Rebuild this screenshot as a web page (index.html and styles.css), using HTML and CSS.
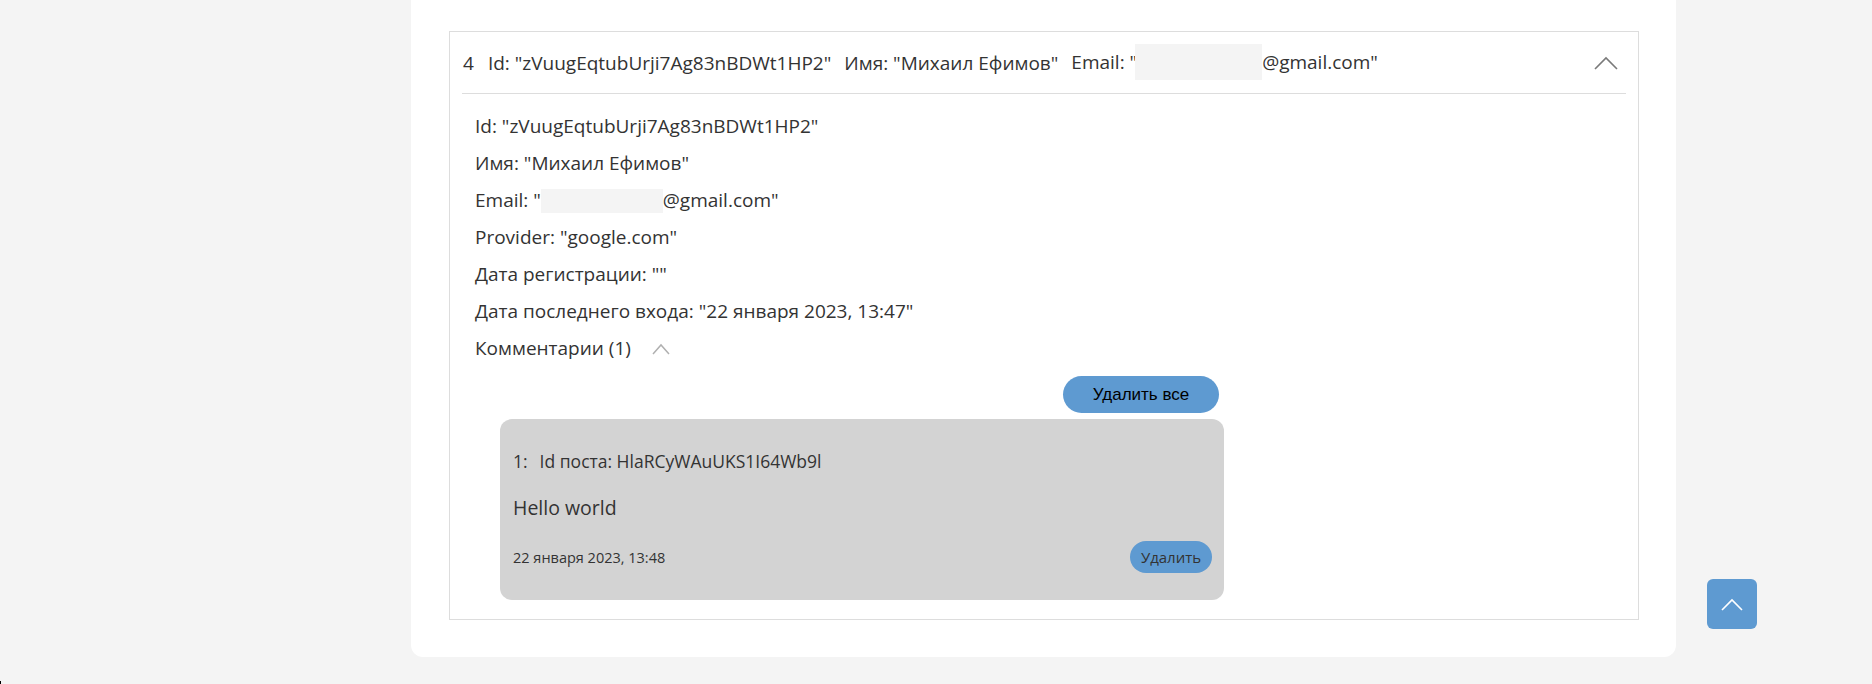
FILE: index.html
```html
<!DOCTYPE html>
<html lang="ru">
<head>
<meta charset="utf-8">
<title>Пользователи</title>
<link rel="stylesheet" href="styles.css">
</head>
<body>
<div class="page">
  <main class="card">
    <section class="acc">
      <div class="acc-head">
        <span class="acc-num">4</span>
        <span class="acc-item">Id: "zVuugEqtubUrji7Ag83nBDWt1HP2"</span>
        <span class="acc-item">Имя: "Михаил Ефимов"</span>
        <span class="acc-item">Email: "<span class="mask mask-head"></span>@gmail.com"</span>
        <svg class="chev-big" width="24" height="14" viewBox="0 0 24 14"><path d="M1 13 L12 2 L23 13" fill="none" stroke="#7a7a7a" stroke-width="1.6"/></svg>
      </div>
      <div class="acc-body">
        <div class="row">Id: "zVuugEqtubUrji7Ag83nBDWt1HP2"</div>
        <div class="row">Имя: "Михаил Ефимов"</div>
        <div class="row">Email: "<span class="mask mask-row"></span>@gmail.com"</div>
        <div class="row">Provider: "google.com"</div>
        <div class="row">Дата регистрации: ""</div>
        <div class="row">Дата последнего входа: "22 января 2023, 13:47"</div>
        <div class="row toggle">Комментарии (1)
          <svg class="chev-small" width="18" height="12" viewBox="0 0 18 12"><path d="M1 11 L9 2 L17 11" fill="none" stroke="#b0b0b0" stroke-width="1.5"/></svg>
        </div>
        <div class="comments">
          <div class="del-all-row"><button class="btn-del-all">Удалить все</button></div>
          <article class="comment">
            <div class="c-head"><span class="c-num">1:</span><span>Id поста: HlaRCyWAuUKS1I64Wb9l</span></div>
            <div class="c-text">Hello world</div>
            <div class="c-foot">
              <span class="c-date">22 января 2023, 13:48</span>
              <button class="btn-del">Удалить</button>
            </div>
          </article>
        </div>
      </div>
    </section>
  </main>
  <div class="footer-mark"></div>
</div>
<button class="to-top" aria-label="Наверх">
  <svg width="22" height="13" viewBox="0 0 22 13"><path d="M1 12 L11 2 L21 12" fill="none" stroke="#ffffff" stroke-width="1.6"/></svg>
</button>
</body>
</html>
```
FILE: styles.css
```css
html, body {
  margin: 0;
  padding: 0;
}
body {
  background: #f4f4f4;
  font-family: "Open Sans", "Noto Sans", sans-serif;
  color: #333;
  overflow: hidden;
}
.page {
  padding-left: 411px;
  width: 1265px;
}
.card {
  background: #fff;
  border-radius: 0 0 12px 12px;
  padding: 31px 37px 37px 38px;
}
.acc {
  border: 1px solid #ddd;
  padding-bottom: 19px;
}
.acc-head {
  display: flex;
  align-items: center;
  margin: 0 12px;
  height: 61px;
  padding: 0 0 0 1px;
  border-bottom: 1px solid #ddd;
  font-size: 19px;
  line-height: 24px;
}
.acc-num {
  margin-right: 14px;
}
.acc-item {
  margin-right: 13px;
  white-space: nowrap;
}
.mask {
  display: inline-block;
  background: #f4f4f4;
  vertical-align: middle;
}
.mask-head {
  width: 127px;
  height: 36px;
  margin: -7px 0 -5px -2px;
}
.mask-row {
  width: 122px;
  height: 24px;
  margin: -4px 0 -2px 0;
}
.chev-big {
  margin-left: auto;
  margin-right: 8px;
  display: block;
}
.acc-body {
  padding: 14px 0 0 25px;
  font-size: 19px;
}
.row {
  line-height: 37px;
  height: 37px;
  white-space: nowrap;
}
.toggle {
  display: flex;
  align-items: center;
}
.chev-small {
  margin-left: 21px;
  display: block;
}
.comments {
  margin-top: 9px;
  margin-left: 25px;
  width: 724px;
}
.del-all-row {
  display: flex;
  justify-content: flex-end;
  padding-right: 5px;
}
.btn-del-all {
  width: 156px;
  height: 37px;
  border: none;
  border-radius: 19px;
  background: #5e9ad1;
  color: #000;
  font-family: "Liberation Sans", Arial, sans-serif;
  font-size: 17px;
  padding: 0;
}
.comment {
  margin-top: 6px;
  height: 181px;
  box-sizing: border-box;
  background: #d3d3d3;
  border-radius: 12px;
  padding: 30px 12px 0 13px;
  display: flex;
  flex-direction: column;
}
.c-head {
  font-size: 17.5px;
  line-height: 24px;
  display: flex;
}
.c-num {
  margin-right: 12px;
}
.c-text {
  margin-top: 22px;
  font-size: 19.5px;
  line-height: 26px;
}
.c-foot {
  margin-top: 20px;
  display: flex;
  align-items: center;
  justify-content: space-between;
}
.c-date {
  font-size: 14.5px;
}
.btn-del {
  width: 82px;
  height: 32px;
  border: none;
  border-radius: 16px;
  background: #5e9ad1;
  color: #333;
  font-family: "Open Sans", "Noto Sans", sans-serif;
  font-size: 15px;
  padding: 0;
}
.footer-mark {
  margin-top: 24px;
  margin-left: -411px;
  width: 1px;
  height: 4px;
  background: #000;
}
.to-top {
  position: fixed;
  right: 115px;
  bottom: 55px;
  width: 50px;
  height: 50px;
  border: none;
  border-radius: 6px;
  background: #5e9ad1;
  display: flex;
  align-items: center;
  justify-content: center;
  padding: 0;
}
.to-top svg {
  display: block;
}
```
